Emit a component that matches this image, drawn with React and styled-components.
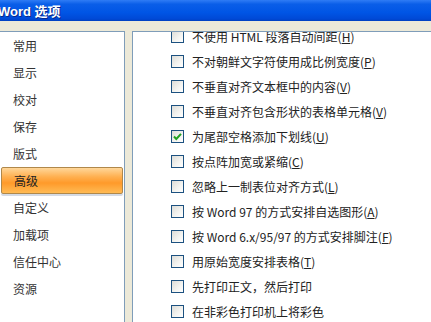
import styled, { createGlobalStyle } from "styled-components";

const Global = createGlobalStyle`
    html, body {
        margin: 0;
        padding: 0;
        overflow: hidden;
        background: #ECE9D8;
    }
`

const Window = styled.div`
    width: 431px;
    height: 322px;
    display: flex;
    flex-direction: column;
    font-family: "Noto Sans CJK SC", "Liberation Sans", sans-serif;
    background: #ECE9D8;
    overflow: hidden;
`

const TitleBar = styled.div`
    height: 21px;
    flex-shrink: 0;
    display: flex;
    align-items: center;
    background: linear-gradient(to bottom, #2f7cf5 0%, #0a5ee8 20%, #0055e5 60%, #0049d6 90%, #003fbf 100%);
    color: #fff;
    font-family: "Liberation Sans", "Noto Sans CJK SC", sans-serif;
    font-weight: bold;
    font-size: 13px;
    text-shadow: 1px 1px 0 #0a2a8a;
    white-space: nowrap;

    span {
        margin-left: -2px;
    }
`

const Content = styled.div`
    flex: 1;
    display: flex;
    gap: 7px;
    padding-top: 10px;
    min-height: 0;
`

const NavPanel = styled.div`
    width: 124px;
    flex-shrink: 0;
    background: #fff;
    border-top: 1px solid #7F9DB9;
    border-right: 1px solid #7F9DB9;
`

const NavItem = styled.div`
    height: 27px;
    display: flex;
    align-items: center;
    padding-left: 13px;
    font-size: 12px;
    color: #333;
    box-sizing: border-box;

    ${p => p.$active && `
        margin: 0 1px;
        padding-left: 12px;
        border: 1px solid #b0884a;
        border-radius: 2px;
        background: linear-gradient(to bottom, #ffd79a 0%, #ffb050 35%, #ff9a2a 60%, #ffbb55 100%);
        color: #222;
        box-shadow: 0 2px 0 #d4dae4;
    `}
`

const OptionsPanel = styled.div`
    flex: 1;
    background: #fff;
    border-top: 1px solid #7F9DB9;
    border-left: 1px solid #7F9DB9;
    overflow: hidden;
`

const OptionList = styled.div`
    margin-top: -8px;
`

const OptionRow = styled.div`
    height: 25px;
    display: flex;
    align-items: center;
    gap: 8px;
    padding-left: 38px;
    font-size: 12px;
    color: #222;
    white-space: nowrap;
`

const Box = styled.span`
    width: 11px;
    height: 11px;
    flex-shrink: 0;
    border: 1px solid #1C5180;
    background: linear-gradient(135deg, #dcdcd7 0%, #f4f4f1 60%, #ffffff 100%);
    display: flex;
    align-items: center;
    justify-content: center;
`

const navItems = ["常用", "显示", "校对", "保存", "版式", "高级", "自定义", "加载项", "信任中心", "资源"]

const options = [
    ["不使用 HTML 段落自动间距", "H"],
    ["不对朝鲜文字符使用成比例宽度", "P"],
    ["不垂直对齐文本框中的内容", "V"],
    ["不垂直对齐包含形状的表格单元格", "V"],
    ["为尾部空格添加下划线", "U", true],
    ["按点阵加宽或紧缩", "C"],
    ["忽略上一制表位对齐方式", "L"],
    ["按 Word 97 的方式安排自选图形", "A"],
    ["按 Word 6.x/95/97 的方式安排脚注", "F"],
    ["用原始宽度安排表格", "T"],
    ["先打印正文，然后打印", null],
    ["在非彩色打印机上将彩色", null],
]

function Checkbox({ checked }) {
    return (
        <Box>
            {checked && (
                <svg width="9" height="9" viewBox="0 0 9 9">
                    <path d="M1 4.5 L3.3 7 L8 1.8" fill="none" stroke="#21a121" strokeWidth="2" />
                </svg>
            )}
        </Box>
    )
}

export default function App() {
    return (
        <>
            <Global />
            <Window>
                <TitleBar><span>Word 选项</span></TitleBar>
                <Content>
                    <NavPanel>
                        {navItems.map(n => (
                            <NavItem key={n} $active={n === "高级"}>{n}</NavItem>
                        ))}
                    </NavPanel>
                    <OptionsPanel>
                        <OptionList>
                            {options.map(([label, key, checked], i) => (
                                <OptionRow key={i}>
                                    <Checkbox checked={checked} />
                                    <span>
                                        {label}
                                        {key && <>(<u>{key}</u>)</>}
                                    </span>
                                </OptionRow>
                            ))}
                        </OptionList>
                    </OptionsPanel>
                </Content>
            </Window>
        </>
    )
}
